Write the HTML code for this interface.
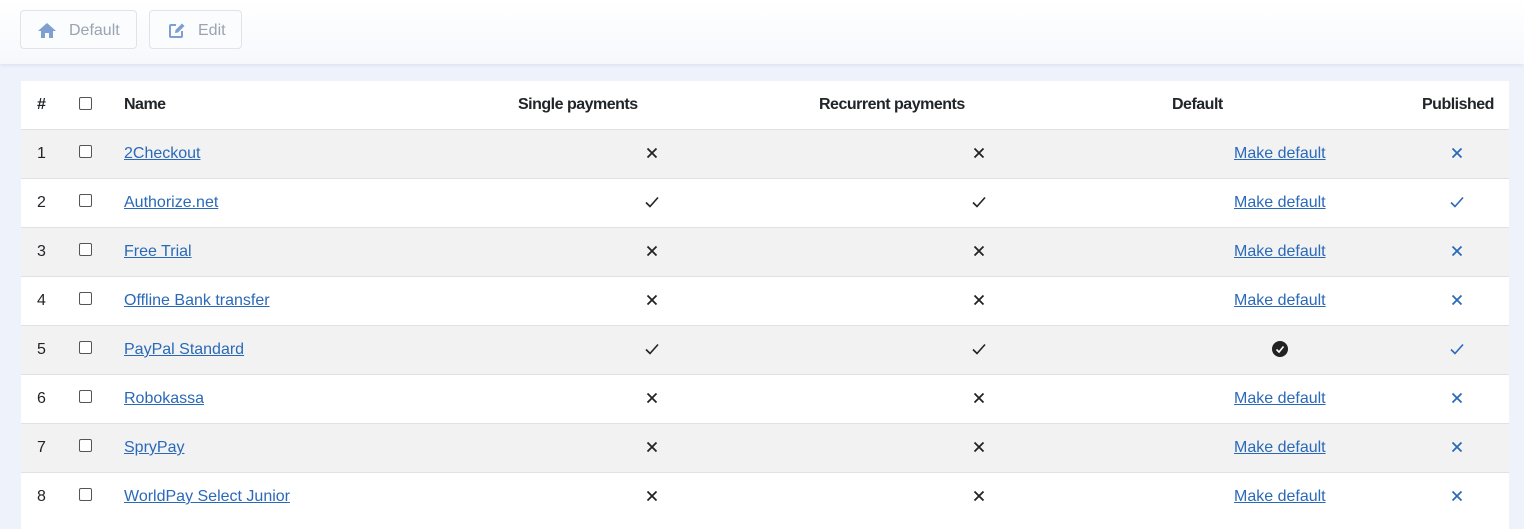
<!DOCTYPE html><html><head><style>
body{margin:0;width:1524px;height:529px;background:#eef3fb;font-family:"Liberation Sans",Arial,sans-serif;font-size:16px;color:#212529;position:relative;overflow:hidden}
.bar{position:absolute;left:0;top:0;width:1524px;height:64px;background:linear-gradient(#fff,#f6f8fc);box-shadow:0 1px 4px rgba(120,140,180,.2)}
.btn{position:absolute;top:10px;height:39px;border:1px solid #dfe3ea;border-radius:4px;background:#fbfcfe;color:#9aa3b0;font-size:16px;line-height:39px;box-sizing:border-box}
.tbl{position:absolute;left:21px;top:81px;width:1488px;height:448px;background:#fff}
.r{position:absolute;left:21px;width:1488px;height:48px;border-top:1px solid #dee2e6}
.t{position:absolute;line-height:20px;white-space:nowrap}
.h{font-weight:bold;letter-spacing:-0.5px}
a{color:#2a69b8;text-decoration:underline}
.cb{position:absolute;width:11px;height:11px;border:1px solid #555;border-radius:2px;background:#fff}
svg{position:absolute}
</style></head><body>
<div class="bar"></div>
<div class="btn" style="left:20px;width:117px"><svg style="left:16px;top:11px" width="20" height="17" viewBox="0 0 20 17"><path d="M10 1 L19 9 H16 V16 H12 V11 H8 V16 H4 V9 H1Z" fill="#7f9fd0"/></svg><span style="position:absolute;left:48px">Default</span></div>
<div class="btn" style="left:149px;width:93px"><svg style="left:18px;top:11px" width="18" height="17" viewBox="0 0 18 17"><path d="M8 3 H3 Q2 3 2 4 V14 Q2 15 3 15 H13 Q14 15 14 14 V9" fill="none" stroke="#7f9fd0" stroke-width="2"/><path d="M7 11 L7.5 8 L14 1.5 L16.5 4 L10 10.5Z" fill="#7f9fd0"/></svg><span style="position:absolute;left:48px">Edit</span></div>
<div class="tbl"></div>
<div id="rows"></div>
<script>
var html='';
var H=[['#',37],['',0],['Name',124],['Single payments',518],['Recurrent payments',819],['Default',1172],['Published',1422]];
H.forEach(function(h){if(h[0])html+='<div class="t h" style="left:'+h[1]+'px;top:95px">'+h[0]+'</div>';});
html+='<div class="cb" style="left:79px;top:97px"></div>';
var names=['2Checkout','Authorize.net','Free Trial','Offline Bank transfer','PayPal Standard','Robokassa','SpryPay','WorldPay Select Junior'];
var ok=[0,1,0,0,1,0,0,0];
function x(cx,cy,c){return '<svg style="left:'+(cx-6)+'px;top:'+(cy-6)+'px" width="12" height="12"><path d="M1.5 1.5L10.5 10.5M10.5 1.5L1.5 10.5" stroke="'+c+'" stroke-width="1.8"/></svg>';}
function v(cx,cy,c){return '<svg style="left:'+(cx-7)+'px;top:'+(cy-6)+'px" width="14" height="12"><path d="M1 6.5L5 10.5L13 1.5" fill="none" stroke="'+c+'" stroke-width="1.6"/></svg>';}
names.forEach(function(n,i){
 var top=129+i*49,cy=top+24;
 html+='<div class="r" style="top:'+top+'px;background:'+(i%2?'#fff':'#f2f2f2')+'"></div>';
 html+='<div class="t" style="left:37px;top:'+(cy-9)+'px">'+(i+1)+'</div>';
 html+='<div class="cb" style="left:79px;top:'+(cy-8)+'px"></div>';
 html+='<div class="t" style="left:124px;top:'+(cy-9)+'px"><a>'+n+'</a></div>';
 var f=ok[i]?v:x;
 html+=f(652,cy,'#222')+f(979,cy,'#222')+f(1457,cy,'#2a69b8');
 if(i==4)html+='<svg style="left:1272px;top:'+(cy-8)+'px" width="16" height="16"><circle cx="8" cy="8" r="8" fill="#222"/><path d="M4.5 8.5L7 11L11.5 5.5" fill="none" stroke="#fff" stroke-width="1.6"/></svg>';
 else html+='<div class="t" style="left:1234px;top:'+(cy-9)+'px"><a>Make default</a></div>';
});
document.getElementById('rows').innerHTML=html;
</script>
</body></html>
